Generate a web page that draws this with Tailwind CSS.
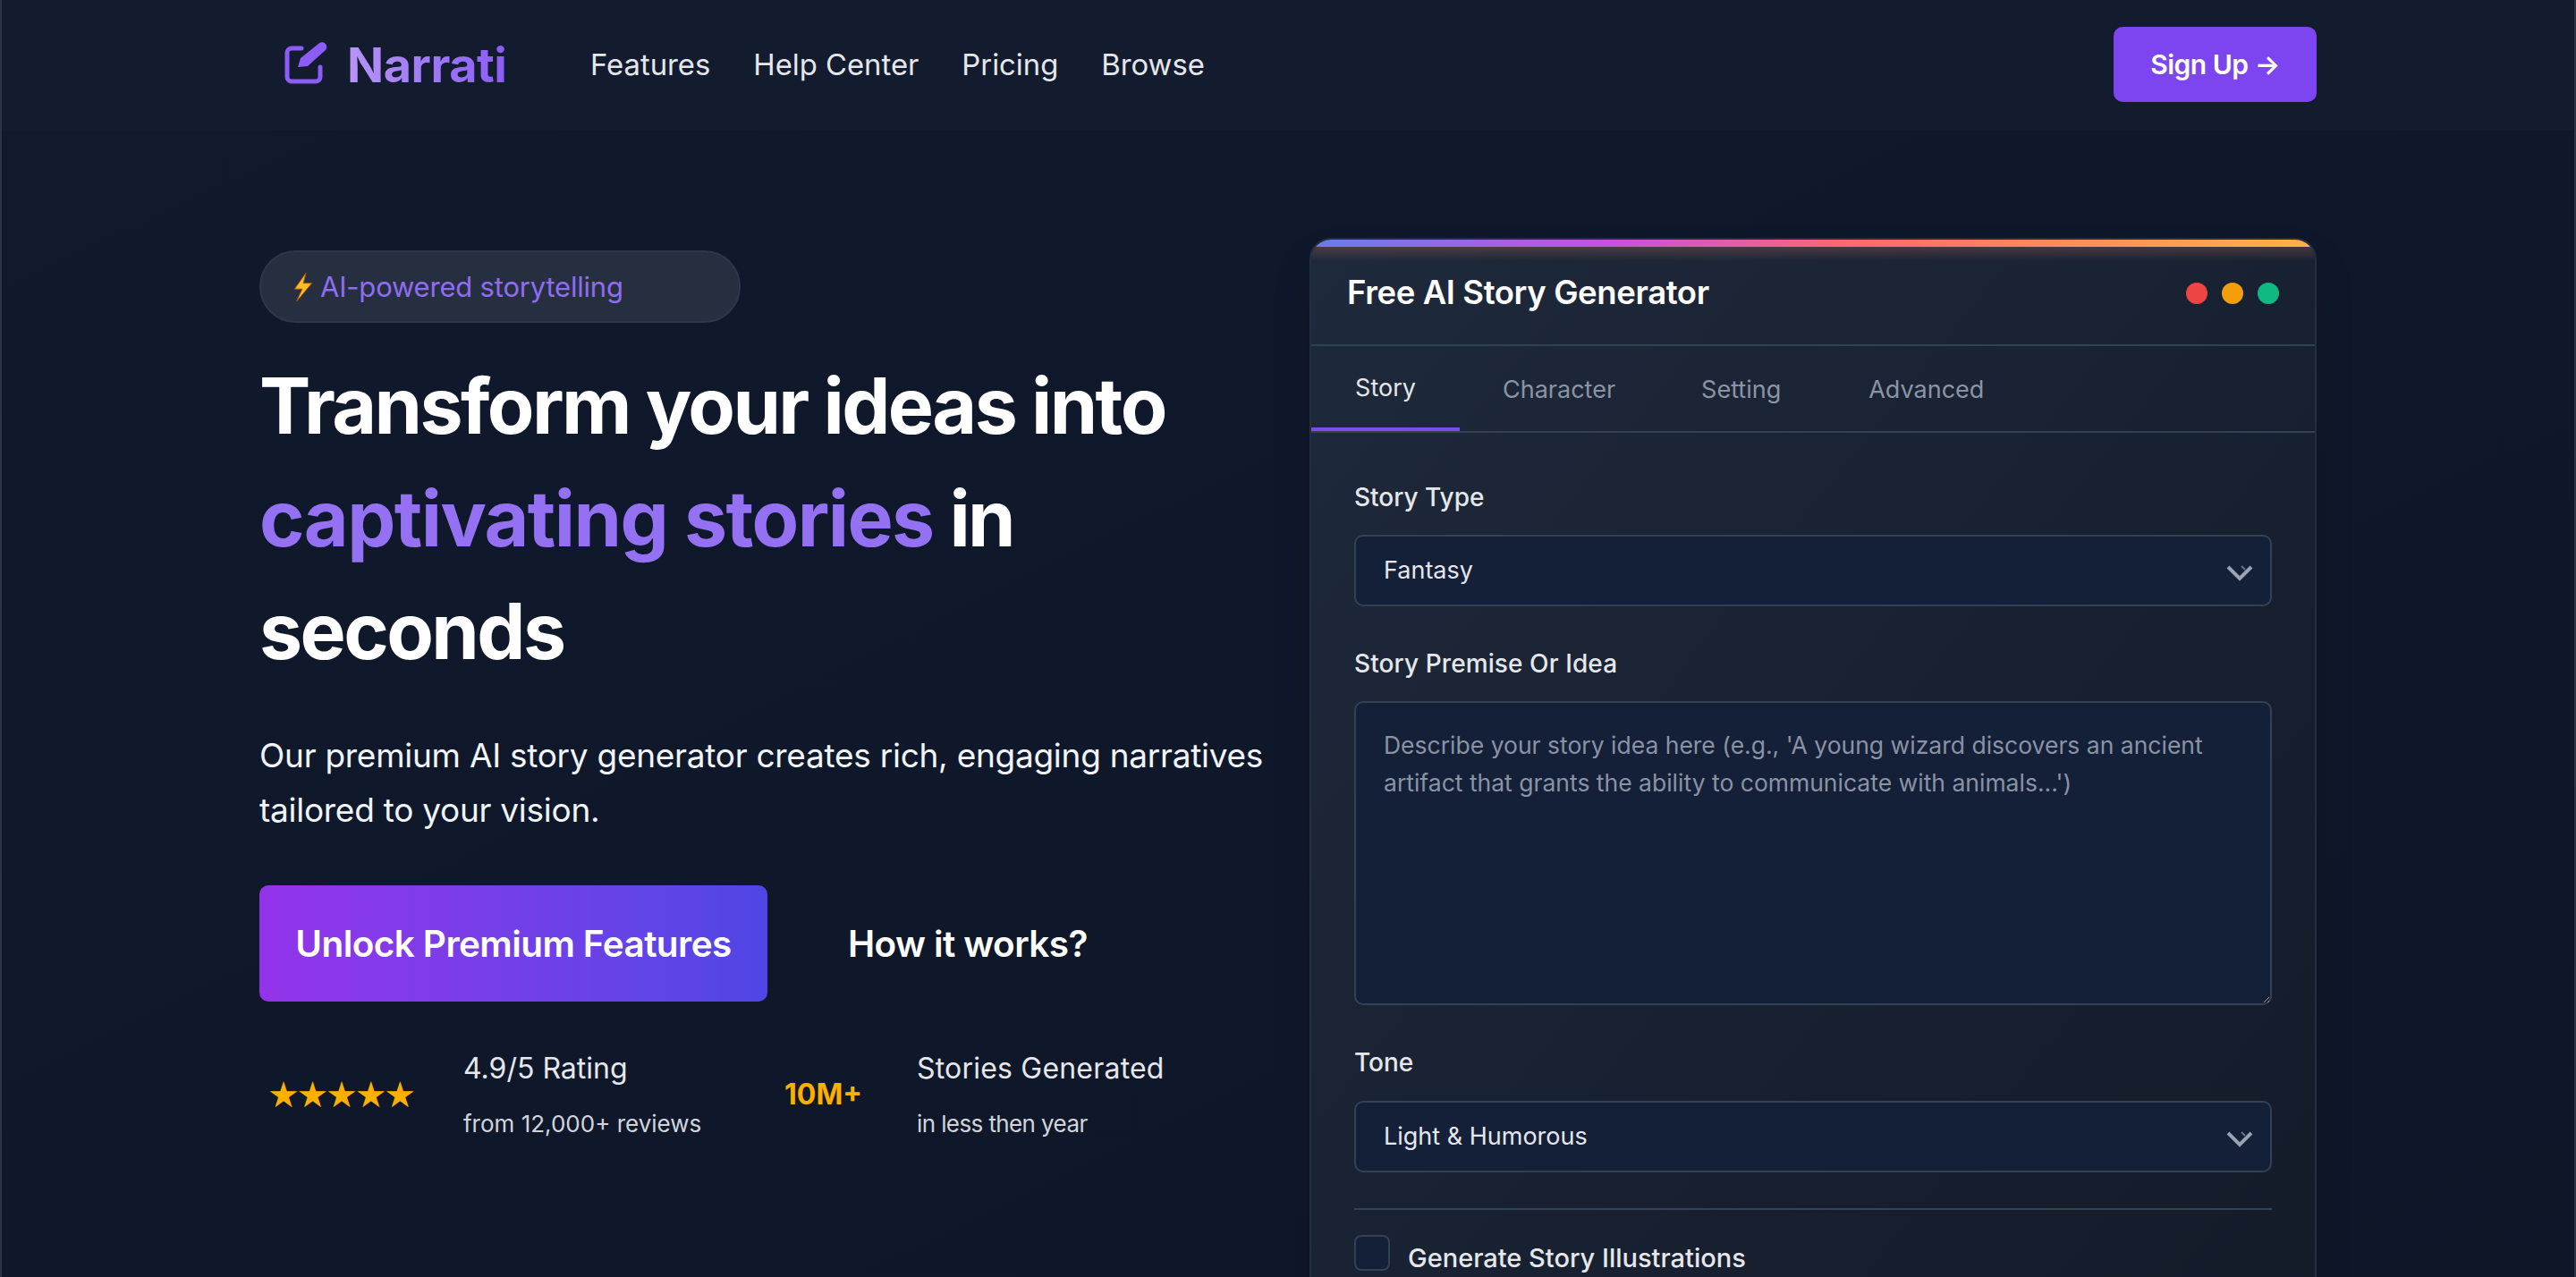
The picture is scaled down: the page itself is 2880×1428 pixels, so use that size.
<!DOCTYPE html>
<html lang="en">
<head>
  <meta charset="UTF-8">
  <meta name="viewport" content="width=device-width, initial-scale=1.0">
  <title>Narrati - AI Story Generator</title>
  <script src="https://cdn.jsdelivr.net/npm/@tailwindcss/browser@4"></script>
</head>
<body class="bg-[#0f172a] font-['Inter',sans-serif] text-white">
<div class="h-[1428px] overflow-hidden border-x-2 border-[#2b3446] bg-gradient-to-br from-[#101a2c] to-[#0e1628]">

  <!-- nav -->
  <header class="h-[146px] bg-[#131b2e]">
    <div class="w-[2300px] mx-auto h-[146px] flex items-center justify-between">
      <div class="flex items-center pl-[28px]">
        <a href="#" class="flex items-center gap-[20px] w-[344px]">
          <svg class="w-[50px] h-[50px] shrink-0 -mt-[2px]" viewBox="0 0 50 50" fill="none" stroke="#8b5cf6" stroke-linecap="round" stroke-linejoin="round">
            <path d="M19 7H8a5 5 0 0 0-5 5v27a5 5 0 0 0 5 5h27a5 5 0 0 0 5-5V28" stroke-width="5"/>
            <path d="M15 28L18 18L38 2a5 5 0 0 1 8 7L26 27Z" fill="#8b5cf6" stroke="none"/>
          </svg>
          <span class="text-[54px] font-bold leading-none tracking-[-0.5px] bg-gradient-to-r from-[#b794f6] to-[#8b5cf6] bg-clip-text text-transparent">Narrati</span>
        </a>
        <nav class="flex items-center gap-[48px] text-[32.8px] text-[#e5e7eb] -ml-[2px]">
          <a href="#">Features</a>
          <a href="#">Help Center</a>
          <a href="#">Pricing</a>
          <a href="#">Browse</a>
        </nav>
      </div>
      <a href="#" class="mb-[2px] w-[227px] h-[84px] flex items-center justify-center rounded-[10px] bg-[#7c45ef] text-[30px] font-semibold tracking-[-0.5px]">Sign Up →</a>
    </div>
  </header>

  <main class="w-[2300px] mx-auto flex justify-between">
    <!-- left column -->
    <section class="w-[1140px] pt-[134px]">
      <div class="w-[538px] h-[81px] flex items-center gap-[6px] pl-[34px] rounded-full bg-[#252f3f] border-2 border-[#2c3849] text-[31px] text-[#8f6cf0] tracking-[-0.2px]">
        <svg class="w-[26px] h-[32px] shrink-0" viewBox="0 0 24 30"><path d="M15 0L3 17h8L5 30 21 11h-9z" fill="#fbbf24" stroke="#b45309" stroke-width="0.8"/></svg>
        <span class="pt-[2px]">AI-powered storytelling</span>
      </div>

      <h1 class="mt-[30px] text-[86px] font-[650] leading-[126px] tracking-[-2.6px]">
        Transform your ideas into<br>
        <span class="text-[#9470f3] tracking-[-1.6px]">captivating stories</span> in<br>
        seconds
      </h1>

      <p class="mt-[45px] whitespace-nowrap text-[37px] leading-[61px] text-[#f1f5f9] tracking-[-0.27px]">
        Our premium AI story generator creates rich, engaging narratives<br>tailored to your vision.
      </p>

      <div class="mt-[54px] flex items-center">
        <a href="#" class="w-[568px] h-[130px] pt-[2px] flex items-center justify-center rounded-[10px] bg-gradient-to-r from-[#9333ea] to-[#4f46e5] text-[40.5px] font-semibold tracking-[-0.6px]">Unlock Premium Features</a>
        <a href="#" class="ml-[90px] pt-[2px] text-[40.5px] font-semibold tracking-[-0.6px]">How it works?</a>
      </div>

      <div class="mt-[52px] flex items-center">
        <div class="w-[228px] pl-[9px] -mt-[2px] text-[40px] leading-none tracking-[-3.3px] text-[#fbb000] font-['DejaVu_Sans',sans-serif]">★★★★★</div>
        <div class="w-[359px]">
          <div class="text-[32px] leading-[46px] text-[#e5e7eb]">4.9/5 Rating</div>
          <div class="mt-[19px] text-[26px] leading-[40px] text-[#d1d5db]">from 12,000+ reviews</div>
        </div>
        <div class="w-[148px] -mt-[2px] text-[32px] font-bold text-[#fbb000]">10M+</div>
        <div>
          <div class="text-[32px] leading-[46px] text-[#e5e7eb] tracking-[0.2px]">Stories Generated</div>
          <div class="mt-[19px] text-[26px] leading-[40px] text-[#d1d5db] tracking-[-0.6px]">in less then year</div>
        </div>
      </div>
    </section>

    <!-- generator card -->
    <section class="relative mt-[120px] w-[1126px] -ml-[1px] h-[1400px] rounded-t-[24px] border-2 border-[#232e3f] bg-gradient-to-br from-[#1e293b] to-[#131a28] overflow-hidden shadow-2xl">
      <div class="h-[8px] bg-[linear-gradient(90deg,#667eea,#c84fe0_30%,#ff6b6b_55%,#ffb347)]"></div>
      <div class="absolute top-[8px] inset-x-0 h-[16px] bg-gradient-to-b from-[#ff8a6b]/20 to-transparent"></div>
      <div class="h-[111px] flex items-center justify-between pl-[40px] pr-[40px] border-b-2 border-[#334155]">
        <h2 class="mb-[6px] text-[36.5px] font-semibold tracking-[-0.4px]">Free AI Story Generator</h2>
        <div class="flex gap-[16px] mb-[5px]">
          <span class="w-[24px] h-[24px] rounded-full bg-[#ef4444]"></span>
          <span class="w-[24px] h-[24px] rounded-full bg-[#f59e0b]"></span>
          <span class="w-[24px] h-[24px] rounded-full bg-[#10b981]"></span>
        </div>
      </div>

      <div class="h-[97px] flex border-b-2 border-[#334155] text-[27px] text-[#8b94a5]">
        <button class="w-[166px] h-[95px] pt-[4px] border-b-[4px] border-[#7c4dee] text-[#e5e7eb]">Story</button>
        <button class="ml-[48px] pt-[4px]">Character</button>
        <button class="ml-[96px] pt-[4px]">Setting</button>
        <button class="ml-[98px] pt-[4px]">Advanced</button>
      </div>

      <form class="px-[48px] pt-[52px]">
        <label class="block text-[28px] font-medium leading-[40px] text-[#e5e7eb]">Story Type</label>
        <div class="relative mt-[22px]">
          <select class="appearance-none w-full h-[80px] pl-[31px] rounded-[10px] border-2 border-[#334155] bg-[#141f38] text-[27px] text-[#e5e7eb]">
            <option>Fantasy</option>
          </select>
          <svg class="absolute right-[21px] top-[34px] w-[30px] h-[18px]" viewBox="0 0 30 18" fill="none" stroke="#9ca3af" stroke-width="4"><path d="M2 2l13 13L28 2"/><path d="M17 1l4 4" stroke="#6b7280" stroke-width="2"/></svg>
        </div>

        <label class="block mt-[44px] text-[28px] font-medium leading-[40px] text-[#e5e7eb] tracking-[0.1px]">Story Premise Or Idea</label>
        <textarea class="block mt-[22px] w-full h-[340px] px-[31px] pt-[26px] rounded-[10px] border-2 border-[#334155] bg-[#141f38] text-[26.5px] leading-[42px] placeholder:text-[#8a93a3] [color-scheme:dark]" placeholder="Describe your story idea here (e.g., 'A young wizard discovers an ancient artifact that grants the ability to communicate with animals...')"></textarea>

        <label class="block mt-[44px] text-[28px] font-medium leading-[40px] text-[#e5e7eb]">Tone</label>
        <div class="relative mt-[23px]">
          <select class="appearance-none w-full h-[80px] pl-[31px] rounded-[10px] border-2 border-[#334155] bg-[#141f38] text-[27px] text-[#e5e7eb]">
            <option>Light &amp; Humorous</option>
          </select>
          <svg class="absolute right-[21px] top-[34px] w-[30px] h-[18px]" viewBox="0 0 30 18" fill="none" stroke="#9ca3af" stroke-width="4"><path d="M2 2l13 13L28 2"/><path d="M17 1l4 4" stroke="#6b7280" stroke-width="2"/></svg>
        </div>

        <div class="mt-[40px] pt-[28px] border-t-2 border-[#334155] flex items-start gap-[20px]">
          <input type="checkbox" class="appearance-none w-[40px] h-[40px] rounded-[8px] border-2 border-[#334155] bg-[#141f38]">
          <label class="mt-[6px] text-[29px] font-medium leading-[40px] text-[#e5e7eb]">Generate Story Illustrations</label>
        </div>
      </form>
    </section>
  </main>
</div>
</body>
</html>
